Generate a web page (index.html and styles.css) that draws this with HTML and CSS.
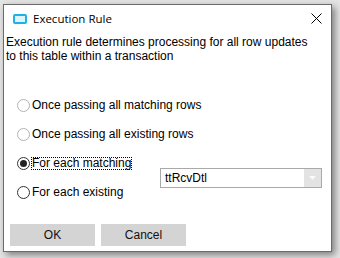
FILE: index.html
```html
<!DOCTYPE html>
<html lang="en">
<head>
    <meta charset="UTF-8">
    <meta name="viewport" content="width=device-width, initial-scale=1.0">
    <title>Execution Rule</title>
    <link rel="stylesheet" href="styles.css">
</head>
<body>
    <div class="dialog">
        <div class="titlebar">
            <span class="app-icon"></span>
            <span class="title">Execution Rule</span>
            <svg class="close" width="11" height="11" viewBox="0 0 11 11">
                <path d="M0.5 0.5 L10.5 10.5 M10.5 0.5 L0.5 10.5" stroke="#000" stroke-width="1" fill="none"/>
            </svg>
        </div>
        <p class="desc">Execution rule determines processing for all row updates to this table within a transaction</p>

        <div class="options">
            <label class="option opt-1"><span class="radio light"></span><span class="label">Once passing all matching rows</span></label>
            <label class="option opt-2"><span class="radio light"></span><span class="label">Once passing all existing rows</span></label>
            <label class="option opt-3"><span class="radio checked"></span><span class="label focus">For each matching</span></label>
            <label class="option opt-4"><span class="radio"></span><span class="label">For each existing</span></label>
            <div class="combo">
                <span class="combo-text">ttRcvDtl</span>
                <span class="combo-btn">
                    <svg width="7" height="4" viewBox="0 0 7 4"><path d="M0 0 L7 0 L3.5 4 Z" fill="#fafafa"/></svg>
                </span>
            </div>
        </div>

        <div class="buttons">
            <button class="btn">OK</button>
            <button class="btn">Cancel</button>
        </div>
    </div>
</body>
</html>
```

FILE: styles.css
```css
body {
    margin: 0;
    height: 258px;
    overflow: hidden;
    background: #e4e4e4;
    font-family: "Liberation Sans", Arial, sans-serif;
    font-size: 12px;
    color: #000;
}
.dialog {
    margin: 4px 0 0 3px;
    width: 327px;
    height: 246px;
    border: 1px solid #6b6b6b;
    background: #fff;
    box-shadow: 3px 3px 7px rgba(0, 0, 0, 0.45);
}
.titlebar {
    height: 27px;
    display: flex;
    align-items: center;
    padding: 0 9px;
}
.app-icon {
    width: 10px;
    height: 6px;
    border: 2px solid #1cb2e8;
    border-radius: 2px;
    background: #dff3fb;
}
.title {
    margin-left: 6px;
    font-family: "Open Sans", "Noto Sans", sans-serif;
    font-size: 11.5px;
    flex: 1;
}
.close {
    display: block;
}
.desc {
    margin: 3px 0 0;
    padding: 0 2px;
    width: 314px;
    line-height: 14px;
}
.options {
    margin-top: 28px;
    padding-left: 13px;
    display: grid;
    grid-template-columns: 143px 162px;
    grid-template-rows: repeat(4, 29px);
}
.option {
    grid-column: 1;
    display: flex;
    align-items: center;
}
.radio {
    width: 11px;
    height: 11px;
    border: 1px solid #333;
    border-radius: 50%;
    display: flex;
    align-items: center;
    justify-content: center;
    flex: none;
}
.radio.light {
    border-color: #b4b4b4;
}
.radio.checked::after {
    content: "";
    width: 7px;
    height: 7px;
    border-radius: 50%;
    background: #222;
}
.label {
    margin-left: 1px;
    border: 1px solid transparent;
    line-height: 11px;
    white-space: nowrap;
}
.label.focus {
    border: 1px dotted #000;
}
.combo {
    grid-column: 2;
    grid-row: 3 / span 2;
    align-self: center;
    height: 18px;
    border: 1px solid #a9a9a9;
    display: flex;
    align-items: center;
}
.combo-text {
    flex: 1;
    padding-left: 4px;
}
.combo-btn {
    width: 17px;
    height: 18px;
    background: #e3e3e3;
    display: flex;
    align-items: center;
    justify-content: center;
}
.combo-btn svg {
    display: block;
}
.buttons {
    margin-top: 17px;
    padding-left: 6px;
    display: flex;
    gap: 6px;
}
.btn {
    width: 85px;
    height: 22px;
    border: none;
    background: #d4d4d4;
    font-family: "Liberation Sans", Arial, sans-serif;
    font-size: 12px;
    color: #111;
    padding: 0;
}
```
